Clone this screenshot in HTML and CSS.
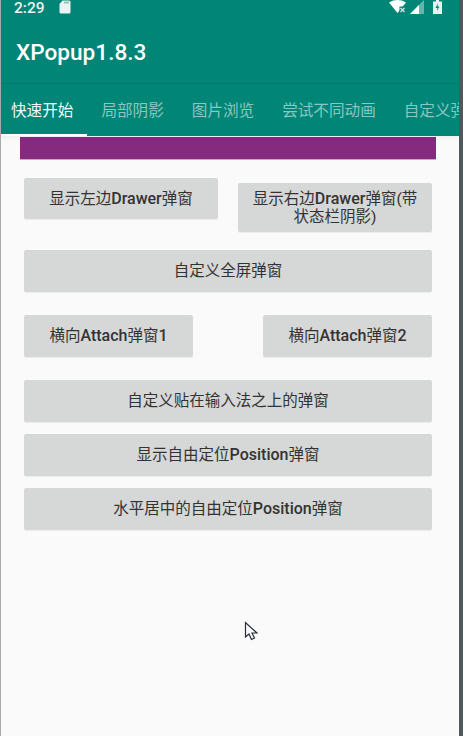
FILE: index.html
```html
<!DOCTYPE html>
<html lang="zh">
<head>
<meta charset="utf-8">
<title>XPopup</title>
<link rel="stylesheet" href="styles.css">
</head>
<body>
<div class="screen">
  <div class="app">
    <header class="appbar">
      <div class="status">
        <div class="status-left">
          <span class="time">2:29</span>
          <svg class="sd" width="12" height="14" viewBox="0 0 12 14"><path d="M3.500 0.500H10a1.500 1.500 0 0 1 1.500 1.500v10a1.500 1.500 0 0 1-1.500 1.500H2A1.500 1.500 0 0 1 .5 12V4z" fill="#e9f3f1"/><path d="M5 1.500h5v2H5z" fill="#8fc4bd"/></svg>
        </div>
        <div class="status-right">
          <svg width="18" height="13" viewBox="0 0 18 13"><path d="M0 2.500C2.500.8 5.500 0 8.500 0s6 .8 8.500 2.500L8.500 13z" fill="#fff"/><rect x="10.500" y="6.500" width="6.500" height="6.500" fill="#008577"/><path d="M11.500 8l4 4m0-4l-4 4" stroke="#d5ebe8" stroke-width="1.200"/></svg>
          <svg class="signal" width="14" height="14" viewBox="0 0 14 14"><path d="M14 0v14H0z" fill="#66b5ab"/><path d="M9 5v9H0z" fill="#fff"/></svg>
          <svg class="battery" width="9" height="14" viewBox="0 0 9 14"><path d="M3 0h3v1.500h3V14H0V1.500h3z" fill="#e8f3f1"/><path d="M5 3L2.500 8h2L3.700 11.500 6.500 6.500h-2z" fill="#008577"/></svg>
        </div>
      </div>
      <div class="toolbar">XPopup1.8.3</div>
      <nav class="tabs">
        <div class="tab tab-active">快速开始</div>
        <div class="tab">局部阴影</div>
        <div class="tab">图片浏览</div>
        <div class="tab">尝试不同动画</div>
        <div class="tab tab-last">自定义弹窗</div>
      </nav>
    </header>
    <main class="content">
      <div class="banner"></div>
      <div class="row row-drawer">
        <button class="btn btn-drawer">显示左边<span class="latin">Drawer</span>弹窗</button>
        <button class="btn btn-drawer btn-two-line">显示右边<span class="latin">Drawer</span>弹窗(带<br>状态栏阴影)</button>
      </div>
      <button class="btn btn-full btn-fullscreen">自定义全屏弹窗</button>
      <div class="row row-attach">
        <button class="btn btn-attach">横向<span class="latin">Attach</span>弹窗<span class="latin">1</span></button>
        <button class="btn btn-attach">横向<span class="latin">Attach</span>弹窗<span class="latin">2</span></button>
      </div>
      <button class="btn btn-full btn-input">自定义贴在输入法之上的弹窗</button>
      <button class="btn btn-full btn-next">显示自由定位<span class="latin">Position</span>弹窗</button>
      <button class="btn btn-full btn-next">水平居中的自由定位<span class="latin">Position</span>弹窗</button>
    </main>
  </div>
  <div class="edge"></div>
  <svg class="cursor" width="14" height="20" viewBox="0 0 14 20"><path d="M1.500 1.500V16l3.500-3 2.500 5.500 3-1.500-2.500-5H13z" fill="#fafafa" stroke="#2a2e38" stroke-width="1.200"/></svg>
</div>
</body>
</html>
```
FILE: styles.css
```css
* { box-sizing: border-box; }
html, body { margin: 0; padding: 0; }
body { width: 463px; height: 736px; overflow: hidden; background: #fafafa; font-family: Roboto, "Noto Sans CJK SC", sans-serif; }
.screen { position: relative; display: flex; width: 463px; height: 736px; }
.app { flex: 1; min-width: 0; border-left: 1px solid #a9a9a9; display: flex; flex-direction: column; overflow: hidden; }
.edge { width: 4px; background: #50585c; }
.appbar { background: #008577; height: 136px; flex: none; position: relative; box-shadow: 0 2px 4px rgba(0,0,0,.05); }
.status { height: 16px; display: flex; justify-content: space-between; align-items: flex-start; padding: 0 17px 0 13px; color: #e9f3f1; }
.status-left { display: flex; align-items: flex-start; gap: 14px; }
.time { font-size: 15.500px; font-weight: 500; line-height: 16px; }
.status-right { display: flex; align-items: flex-start; gap: 3px; }
.signal { margin-right: 6px; }
.toolbar { height: 68px; display: flex; align-items: center; padding: 6px 0 0 15px; color: #fff; font-size: 22.600px; font-weight: 500; border-bottom: 1px solid #007b6e; }
.tabs { display: flex; height: 52px; white-space: nowrap; overflow: hidden; position: relative; padding: 0 0 0 10px; gap: 28px; }
.tab { font-size: 15.600px; line-height: 51px; color: #8ac7c0; flex: none; font-family: "Noto Sans CJK SC", Roboto, sans-serif; }
.tab-active { color: #f2f9f8; position: relative; }
.tab-active::after { content: ""; position: absolute; left: -10px; right: -14px; top: 50px; height: 2px; background: #fff; z-index: 1; }
.tab-last { flex: 0 0 56px; overflow: hidden; }
.content { display: flex; flex-direction: column; padding: 0 27px 0 23px; }
.banner { height: 23px; margin: 1px -4px 18px -4px; background: #862a80; border-bottom: 1px solid #c9a8c6; }
.btn { display: block; border: 0; padding: 0 8px; margin: 0; background: #d6d7d7; border-radius: 2px; box-shadow: 0 1px 1px rgba(0,0,0,.06); color: #333; font-family: Roboto, "Noto Sans CJK SC", sans-serif; font-size: 15.500px; line-height: 18px; text-align: center; }
.latin { font-weight: 500; font-size: 16px; }
.row { display: flex; justify-content: space-between; align-items: flex-start; }
.btn-drawer { width: 194px; height: 41px; }
.btn-two-line { height: 49px; margin-top: 5px; }
.row-drawer { height: 54px; margin-bottom: 18px; }
.btn-full { width: 100%; height: 42px; }
.row-attach { margin: 23px 0; }
.btn-attach { width: 169px; height: 42px; }
.btn-next { margin-top: 12px; }
.cursor { position: absolute; left: 244px; top: 621px; }
```
